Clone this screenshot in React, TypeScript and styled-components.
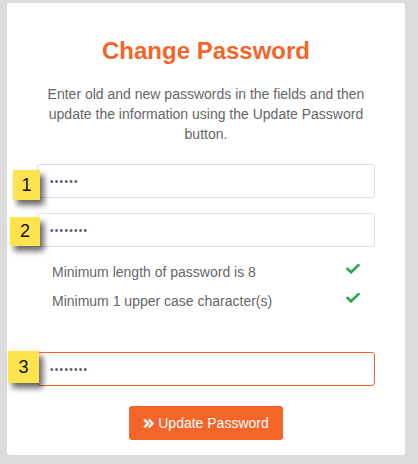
import React from "react";
import styled, { createGlobalStyle } from "styled-components";

const ORANGE = "#f4652a";

const GlobalStyle = createGlobalStyle`
  html, body {
    margin: 0;
    padding: 0;
    background: #dcdcdc;
    font-family: "Liberation Sans", Arial, sans-serif;
  }
`;

const Page = styled.div`
  padding: 3px 13px 9px 7px;
`;

const Card = styled.div`
  width: 398px;
  height: 452px;
  box-sizing: border-box;
  background: #ffffff;
  border-radius: 3px;
  padding: 34px 30px 15px;
  display: flex;
  flex-direction: column;
`;

const Title = styled.h1`
  margin: 0;
  font-size: 24px;
  line-height: 28px;
  font-weight: bold;
  color: ${ORANGE};
  text-align: center;
`;

const Description = styled.p`
  margin: 19px 0 0;
  font-size: 14px;
  line-height: 20px;
  color: #666666;
  text-align: center;
`;

const Field = styled.div<{ $gap: number }>`
  position: relative;
  margin-top: ${(p) => p.$gap}px;
`;

const Input = styled.input<{ $active?: boolean }>`
  display: block;
  width: 100%;
  height: 34px;
  box-sizing: border-box;
  border: 1px solid ${(p) => (p.$active ? ORANGE : "#dedede")};
  border-radius: 3px;
  padding: 0 12px;
  font-family: "Liberation Sans", Arial, sans-serif;
  font-size: 10px;
  letter-spacing: 1.3px;
  color: #4d5a66;
  background: #ffffff;
  outline: none;
`;

const Badge = styled.div<{ $x: number; $y: number; $w: number; $h: number }>`
  position: absolute;
  left: ${(p) => p.$x}px;
  top: ${(p) => p.$y}px;
  width: ${(p) => p.$w}px;
  height: ${(p) => p.$h}px;
  background: #ffe44f;
  box-shadow: 4px 5px 6px rgba(0, 0, 0, 0.6);
  display: flex;
  align-items: center;
  justify-content: center;
  font-size: 18px;
  color: #111111;
  z-index: 2;
`;

const Requirements = styled.ul`
  list-style: none;
  margin: 11px 0 0;
  padding: 0 15px;
`;

const Requirement = styled.li`
  display: flex;
  justify-content: space-between;
  height: 29px;
  line-height: 29px;
  font-size: 14px;
  color: #666666;
`;

const Check = styled.svg`
  margin-top: 6px;
  width: 14px;
  height: 10px;
`;

const SubmitButton = styled.button`
  align-self: center;
  margin-top: 20px;
  height: 34px;
  padding: 0 14px;
  display: inline-flex;
  align-items: center;
  gap: 4px;
  background: ${ORANGE};
  color: #ffffff;
  border: none;
  border-radius: 3px;
  font-family: "Liberation Sans", Arial, sans-serif;
  font-size: 14px;
  cursor: pointer;
`;

const CheckIcon = () => (
  <Check viewBox="0 0 14 10">
    <polyline points="1.5,5 5,8.3 12.5,1.2" fill="none" stroke="#2aa84a" strokeWidth="2.6" strokeLinecap="square" />
  </Check>
);

const DoubleChevron = () => (
  <svg width="11" height="11" viewBox="0 0 11 11">
    <polyline points="1.2,1.5 5,5.5 1.2,9.5" fill="none" stroke="#ffffff" strokeWidth="2.4" />
    <polyline points="5.8,1.5 9.6,5.5 5.8,9.5" fill="none" stroke="#ffffff" strokeWidth="2.4" />
  </svg>
);

export default function App() {
  return (
    <>
      <GlobalStyle />
      <Page>
        <Card>
          <Title>Change Password</Title>
          <Description>
            Enter old and new passwords in the fields and then update the information using the Update Password button.
          </Description>
          <Field $gap={20}>
            <Badge $x={-24} $y={6} $w={27} $h={30}>1</Badge>
            <Input type="password" defaultValue="abcdef" readOnly />
          </Field>
          <Field $gap={15}>
            <Badge $x={-27} $y={4} $w={30} $h={29}>2</Badge>
            <Input type="password" defaultValue="Abcdefgh" readOnly />
          </Field>
          <Requirements>
            <Requirement>
              <span>Minimum length of password is 8</span>
              <CheckIcon />
            </Requirement>
            <Requirement>
              <span>Minimum 1 upper case character(s)</span>
              <CheckIcon />
            </Requirement>
          </Requirements>
          <Field $gap={36}>
            <Badge $x={-29} $y={-1} $w={31} $h={32}>3</Badge>
            <Input type="password" defaultValue="Abcdefgh" readOnly $active />
          </Field>
          <SubmitButton type="button">
            <DoubleChevron />
            Update Password
          </SubmitButton>
        </Card>
      </Page>
    </>
  );
}
